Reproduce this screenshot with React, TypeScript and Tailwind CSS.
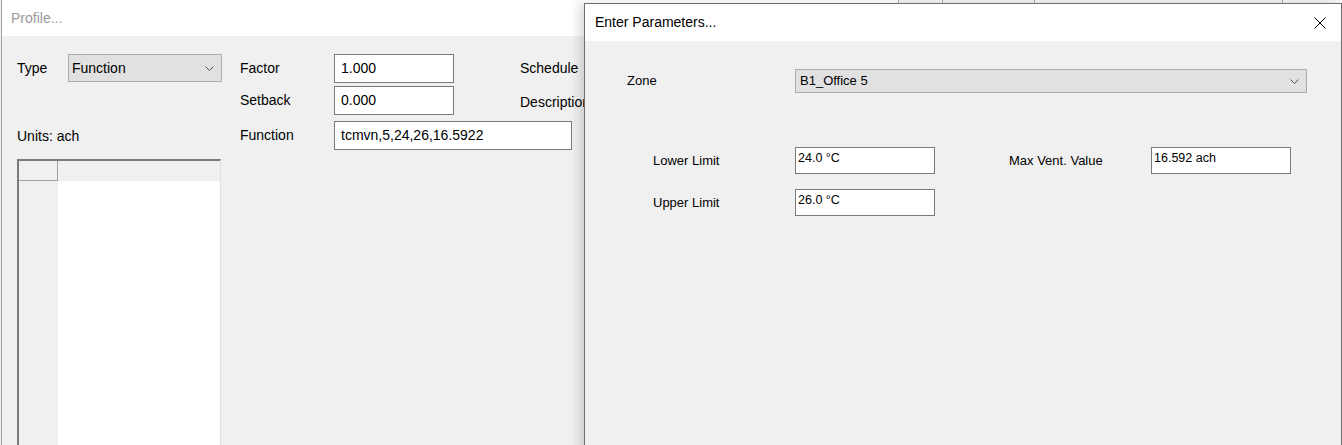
import React from "react";

const Chevron: React.FC = () => (
    <svg width="9" height="5" viewBox="0 0 9 5" className="shrink-0">
        <path d="M0.5 0.5 L4.5 4.5 L8.5 0.5" fill="none" stroke="#505050" strokeWidth="1" />
    </svg>
);

const ProfileInput: React.FC<{ value: string; width: string }> = ({ value, width }) => (
    <div className={`${width} flex h-[29px] items-center border border-[#7a7a7a] bg-white pl-[6px] text-[14px] text-black`}>
        {value}
    </div>
);

const DialogInput: React.FC<{ value: string }> = ({ value }) => (
    <div className="h-[27px] w-[140px] border border-[#7a7a7a] bg-white pl-[2px] pt-[3px] text-[12.5px] leading-[15px] text-black">
        {value}
    </div>
);

const App: React.FC = () => {
    return (
        <div className="relative h-[445px] w-[1342px] overflow-hidden bg-[#f0f0f0] font-['Liberation_Sans',Arial,sans-serif]">
            {/* Profile window (behind) */}
            <div className="ml-px flex h-full flex-col border-l border-[#a0a0a0]">
                <div className="flex h-9 items-center bg-white pl-[9px] text-[14px] text-[#9a9a9a]">
                    Profile...
                </div>
                <div className="flex flex-1 bg-[#f0f0f0] pl-[15px] pt-[18px] text-[14px] text-black">
                    <div className="flex w-[205px] flex-col">
                        <div className="flex h-[28px] items-center">
                            <span className="w-[51px]">Type</span>
                            <div className="flex h-[28px] w-[154px] items-center justify-between border border-[#adadad] bg-[#e1e1e1] pl-[3px] pr-[7px]">
                                <span>Function</span>
                                <Chevron />
                            </div>
                        </div>
                        <div className="mt-[46px] leading-4">Units: ach</div>
                        <div className="mt-[15px] flex w-[204px] flex-1 flex-col border-l-2 border-t-2 border-r border-[#7a7a7a] border-r-[#e3e3e3] bg-white">
                            <div className="flex h-[20px] bg-[#f0f0f0]">
                                <div className="w-[39px] border-b border-r border-[#a0a0a0]" />
                            </div>
                            <div className="flex flex-1">
                                <div className="w-[39px] bg-[#f0f0f0]" />
                                <div className="flex-1 bg-white" />
                            </div>
                        </div>
                    </div>

                    <div className="ml-[18px] flex flex-col">
                        <div className="flex h-[29px] items-center">
                            <span className="w-[94px]">Factor</span>
                            <ProfileInput value="1.000" width="w-[120px]" />
                            <span className="ml-[66px]">Schedule</span>
                        </div>
                        <div className="mt-[3px] flex h-[29px] items-center">
                            <span className="w-[94px]">Setback</span>
                            <ProfileInput value="0.000" width="w-[120px]" />
                            <span className="ml-[66px] pt-[4px]">Description</span>
                        </div>
                        <div className="mt-[6px] flex h-[29px] items-center">
                            <span className="w-[94px]">Function</span>
                            <ProfileInput value="tcmvn,5,24,26,16.5922" width="w-[238px]" />
                        </div>
                    </div>
                </div>
            </div>

            {/* strip of whatever lies behind, above the dialog */}
            <div className="absolute left-[584px] right-0 top-0 flex h-[3px] bg-white">
                <div className="w-[314px]" />
                <div className="w-[44px] border-l border-[#b0b0b0] bg-[#f7f7f7]" />
                <div className="w-[92px] border-l border-[#b0b0b0] bg-[#f7f7f7]" />
                <div className="w-[248px] border-l border-[#b0b0b0] bg-[#f7f7f7]" />
                <div className="flex-1 border-l border-[#b0b0b0] bg-[#f7f7f7]" />
            </div>

            {/* Enter Parameters dialog */}
            <div className="absolute left-[584px] top-[3px] flex h-[460px] w-[758px] flex-col border border-[#6e6e6e] shadow-[-5px_0_10px_rgba(0,0,0,0.14)]">
                <div className="flex h-[37px] items-center justify-between bg-white pl-[10px] pr-[15px] text-[14px] text-black">
                    <span>Enter Parameters...</span>
                    <svg width="12" height="12" viewBox="0 0 12 12">
                        <path d="M0.5 0.5 L11.5 11.5 M11.5 0.5 L0.5 11.5" stroke="#000" strokeWidth="1" />
                    </svg>
                </div>
                <div className="flex flex-1 flex-col bg-[#f0f0f0] pt-[28px] text-[13px] text-black">
                    <div className="flex h-[24px] items-center pl-[42px]">
                        <span className="w-[168px]">Zone</span>
                        <div className="flex h-[24px] w-[512px] items-center justify-between border border-[#adadad] bg-[#e1e1e1] pl-[4px] pr-[7px]">
                            <span>B1_Office 5</span>
                            <Chevron />
                        </div>
                    </div>
                    <div className="mt-[54px] flex items-center pl-[68px]">
                        <span className="w-[142px]">Lower Limit</span>
                        <DialogInput value="24.0 °C" />
                        <span className="ml-[74px] w-[142px]">Max Vent. Value</span>
                        <DialogInput value="16.592 ach" />
                    </div>
                    <div className="mt-[15px] flex items-center pl-[68px]">
                        <span className="w-[142px]">Upper Limit</span>
                        <DialogInput value="26.0 °C" />
                    </div>
                </div>
            </div>
        </div>
    );
};

export default App;
